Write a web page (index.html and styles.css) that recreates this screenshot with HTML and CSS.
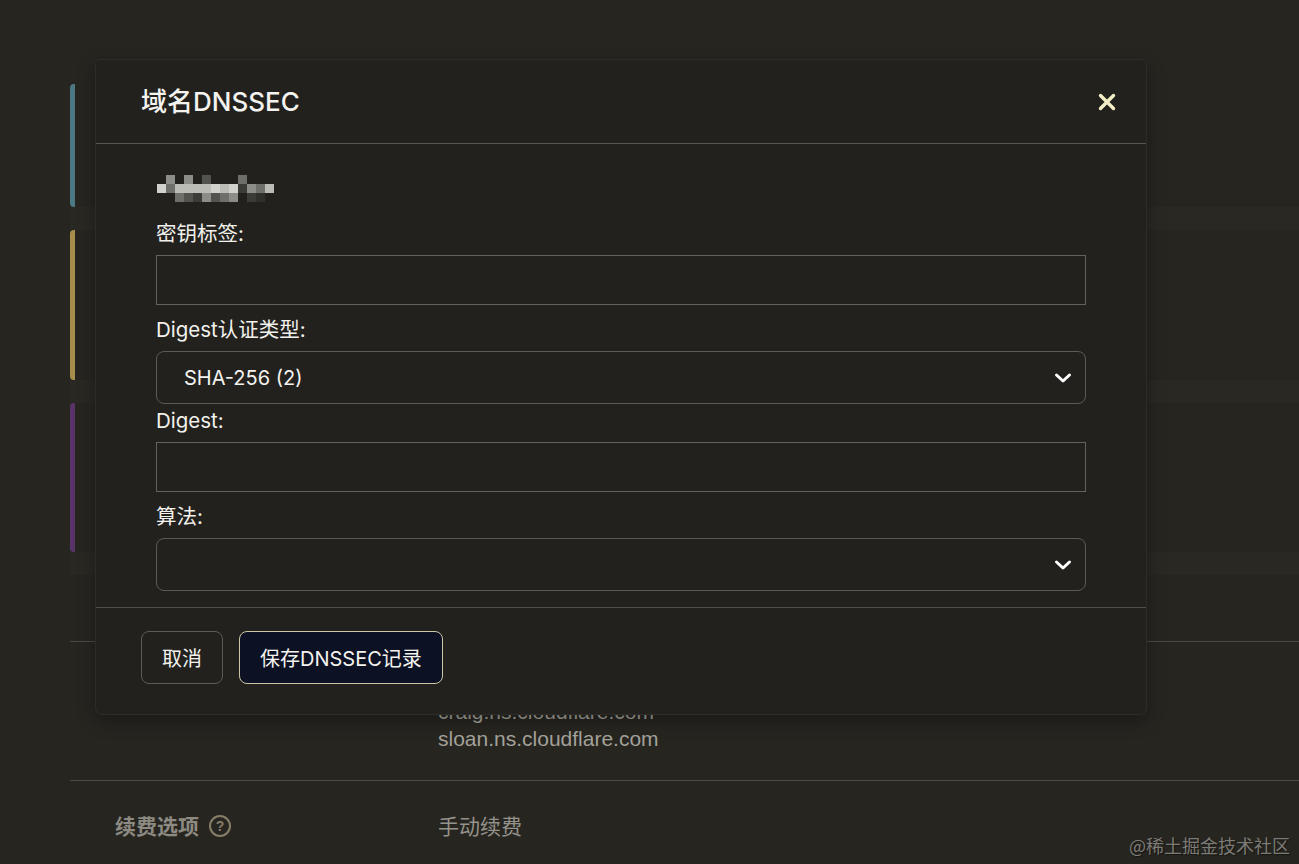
FILE: index.html
```html
<!DOCTYPE html>
<html lang="zh-CN">
<head>
  <meta charset="UTF-8">
  <meta name="viewport" content="width=device-width, initial-scale=1.0">
  <title>域名DNSSEC</title>
  <link rel="stylesheet" href="styles.css">
</head>
<body>
  <!-- 背景页面 -->
  <div class="page">
    <div class="cards">
      <div class="card card-teal"></div>
      <div class="card card-gold"></div>
      <div class="card card-purple"></div>
    </div>

    <div class="rows">
      <div class="row row-empty"></div>
      <div class="row">
        <div class="row-label"></div>
        <div class="row-value ns-list">
          <div>craig.ns.cloudflare.com</div>
          <div>sloan.ns.cloudflare.com</div>
        </div>
      </div>
      <div class="row row-renew">
        <div class="row-label">续费选项 <span class="help">?</span></div>
        <div class="row-value">手动续费</div>
      </div>
    </div>
  </div>

  <!-- DNSSEC 弹窗 -->
  <div class="modal">
    <div class="modal-header">
      <h2 class="modal-title">域名DNSSEC</h2>
      <button class="close-btn" aria-label="关闭">
        <svg width="20" height="20" viewBox="0 0 20 20"><path d="M3.5 3.5 L16.5 16.5 M16.5 3.5 L3.5 16.5" stroke="#f4eec6" stroke-width="3.4" stroke-linecap="round" fill="none"/></svg>
      </button>
    </div>

    <div class="modal-body">
      <!-- 打码的域名 -->
      <div class="mosaic">
        <span></span><span class="c"></span><span></span><span class="c"></span><span></span><span class="e"></span><span></span><span></span><span></span><span class="d"></span><span></span><span></span><span></span>
        <span class="a"></span><span class="d"></span><span class="b"></span><span class="b"></span><span class="b"></span><span class="b"></span><span class="a"></span><span class="b"></span><span class="a"></span><span class="f"></span><span class="c"></span><span class="d"></span><span class="b"></span>
        <span></span><span></span><span class="d"></span><span class="e"></span><span class="f"></span><span class="c"></span><span class="e"></span><span class="d"></span><span class="c"></span><span></span><span class="f"></span><span class="g"></span><span></span>
      </div>

      <label class="field-label">密钥标签:</label>
      <input class="field-input" type="text">

      <label class="field-label">Digest认证类型:</label>
      <div class="field-select">
        <select>
          <option>SHA-256 (2)</option>
        </select>
        <svg class="chevron" width="18" height="11" viewBox="0 0 18 11"><path d="M2.5 2.5 L9 8.5 L15.5 2.5" stroke="#fff" stroke-width="3" stroke-linecap="round" stroke-linejoin="round" fill="none"/></svg>
      </div>

      <label class="field-label">Digest:</label>
      <input class="field-input" type="text">

      <label class="field-label">算法:</label>
      <div class="field-select">
        <select>
          <option></option>
        </select>
        <svg class="chevron" width="18" height="11" viewBox="0 0 18 11"><path d="M2.5 2.5 L9 8.5 L15.5 2.5" stroke="#fff" stroke-width="3" stroke-linecap="round" stroke-linejoin="round" fill="none"/></svg>
      </div>
    </div>

    <div class="modal-footer">
      <button class="btn btn-cancel">取消</button>
      <button class="btn btn-save">保存DNSSEC记录</button>
    </div>
  </div>

  <div class="watermark">@稀土掘金技术社区</div>
</body>
</html>
```

FILE: styles.css
```css
* {
  margin: 0;
  padding: 0;
  box-sizing: border-box;
}

body {
  position: relative;
  height: 864px;
  overflow: hidden;
  background-color: #262520;
  color: #f2f1ec;
  font-family: Inter, "Noto Sans CJK SC", sans-serif;
}

/* 背景页面 */
.page {
  padding: 84px 0 0 70px;
}

.cards {
  display: flex;
  flex-direction: column;
  gap: 23px;
  padding-bottom: 23px;
  background-color: #292823;
}

.card {
  background-color: #262520;
  border-left: 5px solid;
  border-radius: 4px 0 0 4px;
}

.card-teal {
  height: 123px;
  border-left-color: #4c7884;
}

.card-gold {
  height: 150px;
  border-left-color: #a68d4c;
}

.card-purple {
  height: 149px;
  border-left-color: #5a3469;
}

.row {
  display: flex;
  border-bottom: 1px solid #4b4a45;
}

.row-empty {
  height: 67px;
}

.row-label {
  width: 368px;
  padding-left: 45px;
  color: #8d8a82;
  font-size: 21px;
  font-weight: 700;
  display: flex;
  align-items: center;
  gap: 10px;
  font-family: "Noto Sans CJK SC", sans-serif;
}

.row-value {
  color: #95928b;
  font-size: 21px;
  font-family: "Noto Sans CJK SC", sans-serif;
}

.ns-list {
  padding: 56px 0 28px;
  font-family: "Liberation Sans", Arial, sans-serif;
  font-size: 21px;
  line-height: 27px;
  color: #a3a19a;
}

.row-renew {
  border-bottom: none;
  padding-top: 30px;
  line-height: 28px;
}

.row-renew .row-label {
  align-items: flex-start;
}

.help {
  display: inline-flex;
  align-items: center;
  justify-content: center;
  width: 22px;
  height: 22px;
  margin-top: 4px;
  border: 2px solid #877e68;
  border-radius: 50%;
  color: #877e68;
  font-family: "Liberation Sans", sans-serif;
  font-size: 14px;
  font-weight: 700;
  line-height: 1;
}

/* 弹窗 */
.modal {
  position: absolute;
  top: 60px;
  left: 96px;
  width: 1050px;
  background-color: #22211e;
  border-radius: 4px 4px 6px 6px;
  box-shadow: 0 0 0 1px #2d2c28, 0 6px 18px rgba(0, 0, 0, 0.35);
}

.modal-header {
  height: 84px;
  padding: 0 29px 5px 45px;
  display: flex;
  align-items: center;
  justify-content: space-between;
  border-bottom: 1px solid #57564f;
}

.modal-title {
  font-size: 26px;
  font-weight: 500;
  color: #f4f3ef;
}

.close-btn {
  background: none;
  border: none;
  display: flex;
  margin-top: 5px;
  cursor: pointer;
}

.modal-body {
  padding: 0 60px 16px;
}

.mosaic {
  display: grid;
  grid-template-columns: repeat(13, 9px);
  grid-auto-rows: 9px;
  margin: 31px 0 19px 1px;
  width: 117px;
}

.mosaic .a { background-color: #d2d2cd; }
.mosaic .b { background-color: #bcbcb7; }
.mosaic .c { background-color: #8c8c88; }
.mosaic .d { background-color: #6e6e6a; }
.mosaic .e { background-color: #52524e; }
.mosaic .f { background-color: #3b3b38; }
.mosaic .g { background-color: #2f2f2c; }

.field-label {
  display: block;
  font-size: 20.5px;
  line-height: 26px;
  margin-bottom: 8px;
  color: #f2f1ec;
}

.field-input {
  display: block;
  width: 100%;
  height: 50px;
  margin-bottom: 12px;
  background: transparent;
  border: 1px solid #63625c;
  outline: none;
  color: #fff;
  font: inherit;
}

.field-select {
  position: relative;
  height: 53px;
  margin-bottom: 4px;
  border: 1px solid #5b5a54;
  border-radius: 8px;
}

.field-select:last-child {
  margin-bottom: 0;
}

.field-select select {
  width: 100%;
  height: 100%;
  appearance: none;
  background: transparent;
  border: none;
  outline: none;
  padding-left: 27px;
  color: #f4f3ef;
  font-family: Inter, "Noto Sans CJK SC", sans-serif;
  font-size: 20px;
}

.chevron {
  position: absolute;
  right: 13px;
  top: 50%;
  transform: translateY(-50%);
  pointer-events: none;
}

.modal-footer {
  display: flex;
  gap: 16px;
  padding: 23px 45px 30px;
  border-top: 1px solid #4f4e48;
}

.btn {
  height: 53px;
  padding: 0 20px;
  border-radius: 8px;
  font-family: Inter, "Noto Sans CJK SC", sans-serif;
  font-size: 20px;
  color: #f4f3ef;
  cursor: pointer;
}

.btn-cancel {
  background: transparent;
  border: 1px solid #5d5b55;
}

.btn-save {
  background-color: #0c1123;
  border: 1px solid #cdc7a8;
}

.watermark {
  position: absolute;
  right: 9px;
  bottom: 6px;
  font-family: "Noto Sans CJK SC", sans-serif;
  font-size: 18px;
  color: #7d7b75;
  text-shadow: 1px 1px 1px #141412;
}
```
